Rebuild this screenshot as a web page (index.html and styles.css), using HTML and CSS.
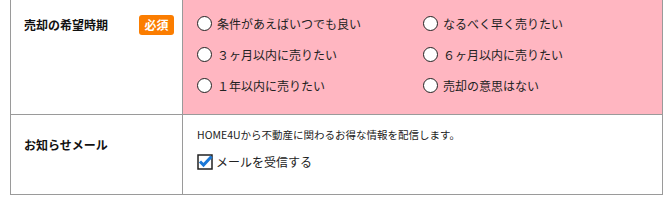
FILE: index.html
```html
<!DOCTYPE html>
<html lang="ja">
  <head>
    <meta charset="UTF-8" />
    <title>売却の希望時期</title>
    <link rel="stylesheet" href="styles.css">
  </head>
  <body>
    <div class="FormTable">
      <div class="row">
        <div class="head">
          <span class="label">売却の希望時期</span>
          <span class="badge">必須</span>
        </div>
        <div class="body pink">
          <div class="radios">
            <label class="radio"><input type="radio" name="timing" />条件があえばいつでも良い</label>
            <label class="radio"><input type="radio" name="timing" />なるべく早く売りたい</label>
            <label class="radio"><input type="radio" name="timing" />３ヶ月以内に売りたい</label>
            <label class="radio"><input type="radio" name="timing" />６ヶ月以内に売りたい</label>
            <label class="radio"><input type="radio" name="timing" />１年以内に売りたい</label>
            <label class="radio"><input type="radio" name="timing" />売却の意思はない</label>
          </div>
        </div>
      </div>
      <div class="row line">
        <div class="head mail">
          <span class="label">お知らせメール</span>
        </div>
        <div class="body">
          <p class="note">HOME4Uから不動産に関わるお得な情報を配信します。</p>
          <label class="check">
            <svg width="16" height="16" viewBox="0 0 16 16">
              <rect x="1" y="1" width="14" height="14" fill="#fff" stroke="#222" stroke-width="1.5" />
              <path d="M3 7.5 L6.5 11 L14.5 2.5" fill="none" stroke="#1a78d8" stroke-width="3" />
            </svg>
            メールを受信する
          </label>
        </div>
      </div>
    </div>
  </body>
</html>
```

FILE: styles.css
```css
body {
  margin: 0;
  font-family: "Noto Sans CJK JP", "Noto Sans", sans-serif;
  color: #222;
  background: #fff;
}

.FormTable {
  margin-left: 10px;
  width: 651px;
  border: 1px solid #9a9a9a;
  border-top: none;
}

.row {
  display: flex;
}

.row.line {
  border-top: 1px solid #9a9a9a;
}

.head {
  flex: none;
  width: 150px;
  padding: 15px 8px 0 13px;
  border-right: 1px solid #9a9a9a;
  display: flex;
  justify-content: space-between;
  align-items: flex-start;
}

.head .label {
  font-size: 12px;
  font-weight: bold;
  line-height: 20px;
  color: #111;
}

.head.mail {
  padding-top: 20px;
}

.badge {
  width: 35px;
  height: 20px;
  border-radius: 3px;
  background-color: #fb7d00;
  color: #fff;
  font-size: 12px;
  font-weight: bold;
  line-height: 20px;
  text-align: center;
}

.body {
  flex: 1;
  padding: 8px 14px 13px 14px;
}

.pink {
  background-color: #ffb6c1;
}

.radios {
  display: grid;
  grid-template-columns: 226px 1fr;
  grid-auto-rows: 31px;
}

.radio {
  display: flex;
  align-items: center;
  gap: 5px;
  font-size: 12px;
  color: #222;
}

.radio input {
  appearance: none;
  margin: 0;
  width: 15px;
  height: 15px;
  border: 1.5px solid #222;
  border-radius: 50%;
  background: #fff;
}

.note {
  margin: 5px 0 0;
  font-size: 10.5px;
  line-height: 14px;
}

.check {
  margin-top: 10px;
  display: flex;
  align-items: center;
  gap: 3px;
  font-size: 12px;
  line-height: 20px;
  padding-bottom: 9px;
}
```
